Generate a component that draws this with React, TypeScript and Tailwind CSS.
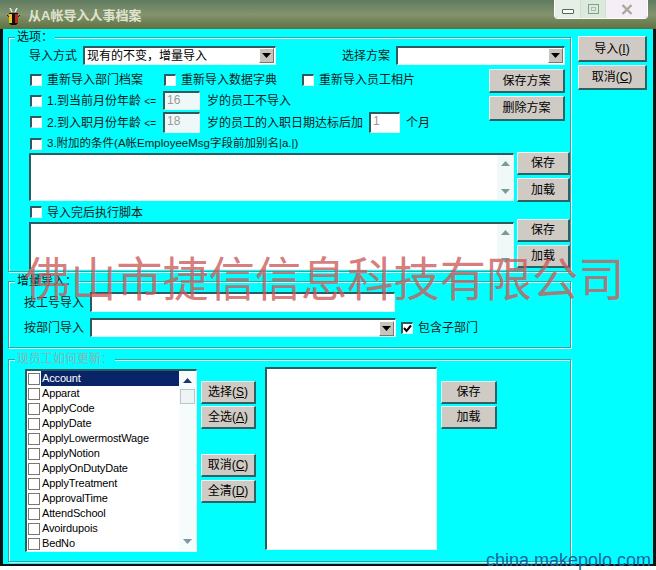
const sunken = "border-t-2 border-l-2 border-t-[#2a5c60] border-l-[#2a5c60] border-r border-b border-r-[#dff5f5] border-b-[#dff5f5]";

function Btn({ label, hot, className = "" }: { label: string; hot?: string; className?: string }) {
  return (
    <button className={`flex items-center justify-center bg-[#cfcac3] border-t border-l border-t-[#e8fbfb] border-l-[#e8fbfb] border-r-2 border-b-2 border-r-[#2a6266] border-b-[#2a6266] text-[12px] leading-none text-black ${className}`}>
      {label}
      {hot && (
        <span>
          (<span className="underline">{hot}</span>)
        </span>
      )}
    </button>
  );
}

function Check({ checked }: { checked?: boolean }) {
  return (
    <span className={`flex h-[12px] w-[12px] shrink-0 items-center justify-center bg-white ${sunken}`}>
      {checked && (
        <svg width="9" height="9" viewBox="0 0 9 9">
          <path d="M1 4l2.5 3L8 1.5" fill="none" stroke="#000" strokeWidth="2" />
        </svg>
      )}
    </span>
  );
}

function Arrow({ down = true, className = "" }: { down?: boolean; className?: string }) {
  return (
    <svg width="9" height="5" viewBox="0 0 9 5" className={className}>
      <path d={down ? "M0 0h9L4.5 5z" : "M0 5h9L4.5 0z"} fill="currentColor" />
    </svg>
  );
}

function Combo({ value, className = "" }: { value?: string; className?: string }) {
  return (
    <div className={`flex items-center bg-white pl-[2px] pr-px text-[12px] text-black ${sunken} ${className}`}>
      <span className="flex-1 truncate">{value}</span>
      <span className="flex h-[15px] w-[15px] items-center justify-center border-t border-l border-white border-r border-b border-r-[#777] border-b-[#777] bg-[#c8c4bc] text-black">
        <Arrow />
      </span>
    </div>
  );
}

function Memo({ className = "" }: { className?: string }) {
  return (
    <div className={`flex justify-end bg-white ${sunken} ${className}`}>
      <div className="flex w-[16px] flex-col items-center justify-between bg-[#f0f8f8] py-[6px] text-[#7d9a9a]">
        <Arrow down={false} />
        <Arrow />
      </div>
    </div>
  );
}

function Group({ legend, legendColor, className = "", children }: { legend: string; legendColor: string; className?: string; children: React.ReactNode }) {
  return (
    <div className={`relative border border-[#3f9f9f] shadow-[inset_1px_1px_0_#e8ffff,1px_1px_0_#e8ffff] ${className}`}>
      <span className={`absolute -top-[8px] left-[6px] bg-[#00ffff] px-[2px] text-[12px] leading-[14px] ${legendColor}`}>{legend}</span>
      {children}
    </div>
  );
}

const fields = ["Account", "Apparat", "ApplyCode", "ApplyDate", "ApplyLowermostWage", "ApplyNotion", "ApplyOnDutyDate", "ApplyTreatment", "ApprovalTime", "AttendSchool", "Avoirdupois", "BedNo"];

export default function App() {
  return (
    <div className="relative h-[570px] w-[656px] overflow-hidden bg-white font-['Liberation_Sans','Noto_Sans_CJK_SC',sans-serif] text-[12px] text-[#1a1a1a]">
      {/* title bar */}
      <div className="flex h-[29px] items-center bg-gradient-to-b from-[#5f7a60] via-[#83946e] to-[#5f7040] pl-[6px] pt-[3px]">
        <svg width="15" height="17" viewBox="0 0 15 17">
          <path d="M3 5h9v10l-2 2H5l-2-2z" fill="#111" />
          <path d="M3 6h3v9H3z" fill="#e8c820" />
          <path d="M9 6h3v9H9z" fill="#c02818" />
          <path d="M4 0l2 4M11 0L9 4" stroke="#eee" strokeWidth="1.5" />
          <path d="M1 7l2 2M14 7l-2 2" stroke="#222" />
        </svg>
        <span className="ml-[7px] text-[13px] font-bold text-[#dfe3d0]">从A帐导入人事档案</span>
      </div>

      {/* window buttons */}
      <div className="absolute left-[554px] top-0 flex h-[19px] w-[94px] overflow-hidden rounded-b-[4px] border border-t-0 border-white">
        <div className="flex w-[25px] items-center justify-center bg-[#e6efe6]">
          <span className="mt-[4px] h-[5px] w-[12px] rounded-[1px] border border-[#506a58] bg-white" />
        </div>
        <div className="flex w-[26px] items-center justify-center border-x border-[#d4dcd4] bg-[#dceadc]">
          <span className="h-[10px] w-[11px] border border-[#7f9f8f] p-[2px]">
            <span className="block h-full w-full border border-[#9fbfaf]" />
          </span>
        </div>
        <div className="flex flex-1 items-center justify-center bg-[#f6eef6]">
          <svg width="12" height="11" viewBox="0 0 12 11">
            <path d="M1.5 1l9 9M10.5 1l-9 9" stroke="#a8a89c" strokeWidth="2.4" />
          </svg>
        </div>
      </div>

      {/* body */}
      <div className="flex h-[537px] border-x-[3px] border-b-2 border-x-[#111] border-b-[#111] bg-[#00ffff] pl-[5px]">
        <div className="w-[563px] shrink-0">
          {/* 选项 */}
          <Group legend="选项：" legendColor="text-[#111]" className="mt-[8px] h-[235px]">
            <div className="mt-[8px] flex h-[18px] items-center pl-[20px]">
              <span className="w-[54px] pt-px">导入方式</span>
              <Combo value="现有的不变，增量导入" className="h-[19px] w-[193px]" />
              <span className="ml-[66px] w-[54px] pt-px">选择方案</span>
              <Combo className="h-[19px] w-[169px]" />
            </div>

            <div className="mt-[5px] flex h-[64px]">
              <div className="w-[480px] pl-[21px]">
                <div className="flex h-[21px] items-center">
                  <Check />
                  <span className="ml-[5px] w-[117px] pt-px">重新导入部门档案</span>
                  <Check />
                  <span className="ml-[5px] w-[121px] pt-px">重新导入数据字典</span>
                  <Check />
                  <span className="ml-[5px] pt-px">重新导入员工相片</span>
                </div>
                <div className="flex h-[21px] items-center">
                  <Check />
                  <span className="ml-[5px] w-[116px] whitespace-nowrap pt-px">
                    1.到当前月份年龄 <span className="text-[10px]">&lt;=</span>
                  </span>
                  <span className={`h-[19px] w-[37px] bg-[#eef8f8] pl-[2px] leading-[15px] text-[#999] ${sunken}`}>16</span>
                  <span className="ml-[7px] pt-px">岁的员工不导入</span>
                </div>
                <div className="flex h-[22px] items-center">
                  <Check />
                  <span className="ml-[5px] w-[116px] whitespace-nowrap pt-px">
                    2.到入职月份年龄 <span className="text-[10px]">&lt;=</span>
                  </span>
                  <span className={`h-[21px] w-[37px] bg-[#eef8f8] pl-[2px] leading-[15px] text-[#999] ${sunken}`}>18</span>
                  <span className="ml-[7px] w-[156px] whitespace-nowrap pt-px">岁的员工的入职日期达标后加</span>
                  <span className={`ml-[6px] h-[21px] w-[31px] bg-white pl-[2px] leading-[15px] text-[#999] ${sunken}`}>1</span>
                  <span className="ml-[6px] pt-px">个月</span>
                </div>
              </div>
              <div className="flex w-[76px] flex-col gap-[3px]">
                <Btn label="保存方案" className="h-[24px]" />
                <Btn label="删除方案" className="h-[25px]" />
              </div>
            </div>

            <div className="mt-[4px] flex h-[14px] items-center pl-[21px]">
              <Check />
              <span className="ml-[5px] text-[11.5px]">3.附加的条件(A帐EmployeeMsg字段前加别名|a.|)</span>
            </div>
            <div className="mt-px flex h-[50px] pl-[20px]">
              <Memo className="mt-px h-[48px] w-[485px]" />
              <div className="ml-[3px] flex w-[53px] flex-col gap-[3px]">
                <Btn label="保存" className="h-[23px]" />
                <Btn label="加载" className="h-[24px]" />
              </div>
            </div>

            <div className="mt-[3px] flex h-[14px] items-center pl-[21px]">
              <Check />
              <span className="ml-[5px] pt-px">导入完后执行脚本</span>
            </div>
            <div className="flex h-[51px] pl-[20px]">
              <Memo className="mt-[3px] h-[48px] w-[485px]" />
              <div className="ml-[3px] flex w-[53px] flex-col gap-[3px]">
                <Btn label="保存" className="h-[23px]" />
                <Btn label="加载" className="h-[23px]" />
              </div>
            </div>
          </Group>

          {/* 增量导入 */}
          <Group legend="增量导入：" legendColor="text-[#111]" className="mt-[9px] h-[67px]">
            <div className="mt-[10px] flex h-[20px] items-center pl-[15px]">
              <span className="w-[66px] pt-px">按工号导入</span>
              <span className={`h-[20px] w-[305px] bg-white ${sunken}`} />
            </div>
            <div className="mt-[6px] flex h-[19px] items-center pl-[15px]">
              <span className="w-[66px] pt-px">按部门导入</span>
              <Combo className="h-[19px] w-[306px]" />
              <span className="ml-[5px]">
                <Check checked />
              </span>
              <span className="ml-[5px] pt-px">包含子部门</span>
            </div>
          </Group>

          {/* 现员工如何更新 */}
          <Group legend="现员工如何更新：" legendColor="text-[#8fb2b2]" className="mt-[11px] h-[203px]">
            <div className="mt-[7px] flex items-start pl-[16px]">
              <div className={`mt-[2px] flex h-[183px] w-[172px] bg-white ${sunken}`}>
                <div className="w-[153px] pl-px">
                  {fields.map((f, i) => (
                    <div key={f} className="flex h-[15px] items-center">
                      <span className="h-[12px] w-[12px] shrink-0 border border-[#777] bg-white" />
                      <span className={`ml-px flex h-[15px] flex-1 items-center pl-px text-[11px] tracking-[-0.15px] ${i === 0 ? "bg-[#0a2468] text-white" : "text-black"}`}>{f}</span>
                    </div>
                  ))}
                </div>
                <div className="relative flex w-[17px] flex-col items-center justify-between bg-[#f6fbfb] py-[7px] text-[#7d96a0]">
                  <Arrow down={false} className="text-[#1a3a6a]" />
                  <Arrow />
                  <span className="absolute left-px top-[18px] h-[15px] w-[15px] border border-[#b8c8c8] bg-[#eef4f4]" />
                </div>
              </div>
              <div className="ml-[4px] flex w-[55px] flex-col pt-[14px]">
                <Btn label="选择" hot="S" className="h-[23px]" />
                <Btn label="全选" hot="A" className="mt-[2px] h-[23px]" />
                <Btn label="取消" hot="C" className="mt-[25px] h-[23px]" />
                <Btn label="全清" hot="D" className="mt-[3px] h-[23px]" />
              </div>
              <div className={`ml-[9px] h-[183px] w-[172px] bg-white ${sunken}`} />
              <div className="ml-[4px] flex w-[56px] flex-col gap-[2px] pt-[14px]">
                <Btn label="保存" className="h-[23px]" />
                <Btn label="加载" className="h-[23px]" />
              </div>
            </div>
          </Group>
        </div>

        <div className="ml-[7px] flex w-[69px] flex-col gap-[3px] pt-[7px]">
          <Btn label="导入" hot="I" className="h-[26px]" />
          <Btn label="取消" hot="C" className="h-[25px]" />
        </div>
      </div>

      {/* watermarks */}
      <div className="pointer-events-none absolute left-[24px] top-[250px] whitespace-nowrap text-[46.2px] leading-[60px] text-[#cc5a5a]/80">
        佛山市捷信信息科技有限公司
      </div>
      <div className="pointer-events-none absolute left-[486px] top-[550px] text-[18px] leading-[20px] text-[#1f5fa0]">
        china.makepolo.com
      </div>
    </div>
  );
}
